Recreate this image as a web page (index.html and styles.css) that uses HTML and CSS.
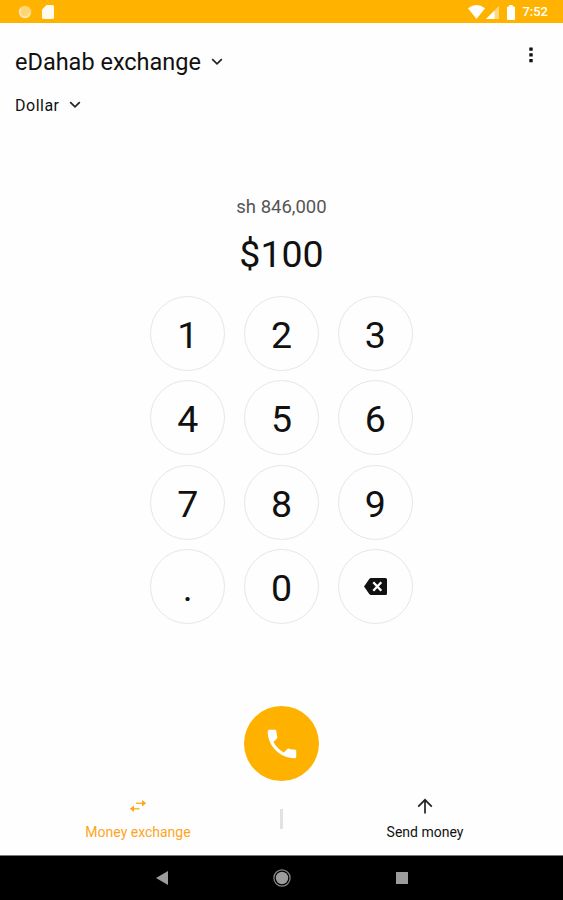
FILE: index.html
```html
<!DOCTYPE html>
<html lang="en">
<head>
  <meta charset="UTF-8">
  <meta name="viewport" content="width=device-width, initial-scale=1.0">
  <title>eDahab exchange</title>
  <link rel="stylesheet" href="styles.css">
</head>
<body>

  <div class="status-bar">
    <div class="status-left">
      <svg width="14" height="14" viewBox="0 0 14 14"><circle cx="7" cy="7" r="6.3" fill="#ffd574"/><path d="M3 3.5A5.2 5.2 0 1 0 12 8" fill="none" stroke="#ffe9b8" stroke-width="1.5"/></svg>
      <svg width="12" height="14" viewBox="0 0 12 14"><path d="M4.5 0H10.500Q12 0 12 1.500V12.500Q12 14 10.500 14H1.500Q0 14 0 12.500V4.500z" fill="#fffaf0"/></svg>
    </div>
    <div class="status-right">
      <svg class="wifi" width="17" height="14" viewBox="0 0 17 14"><path d="M0 3.200Q8.500 -3 17 3.200L8.500 14z" fill="#fff"/></svg>
      <svg class="signal" width="13" height="13" viewBox="0 0 13 13"><path d="M13 0V13H0z" fill="#ffd880"/><path d="M8.500 4.500V13H0z" fill="#fff"/></svg>
      <svg class="battery" width="8" height="15" viewBox="0 0 8 15"><path d="M2.300 0H5.700V1.500H7Q8 1.500 8 2.500V14Q8 15 7 15H1Q0 15 0 14V2.500Q0 1.500 1 1.500H2.300z" fill="#fff"/></svg>
      <span class="clock">7:52</span>
    </div>
  </div>

  <header class="header">
    <div>
      <div class="picker picker-title">
        <span>eDahab exchange</span>
        <svg width="12" height="8" viewBox="0 0 12 8"><path d="M1.200 1.200L6 5.900L10.800 1.200" fill="none" stroke="#222" stroke-width="1.700"/></svg>
      </div>
      <div class="picker picker-currency">
        <span>Dollar</span>
        <svg width="12" height="8" viewBox="0 0 12 8"><path d="M1.200 1.200L6 5.900L10.800 1.200" fill="none" stroke="#222" stroke-width="1.700"/></svg>
      </div>
    </div>
    <svg class="more" width="4" height="16" viewBox="0 0 4 16"><path d="M.3 .5h3.400v3.200H.3zM.3 6.300h3.400v3.200H.3zM.3 12.100h3.400v3.200H.3z" fill="#111"/></svg>
  </header>

  <main class="main">
    <div class="converted">sh 846,000</div>
    <div class="amount">$100</div>

    <div class="keypad">
      <button class="key">1</button>
      <button class="key">2</button>
      <button class="key">3</button>
      <button class="key">4</button>
      <button class="key">5</button>
      <button class="key">6</button>
      <button class="key">7</button>
      <button class="key">8</button>
      <button class="key">9</button>
      <button class="key">.</button>
      <button class="key">0</button>
      <button class="key key-delete" aria-label="Delete">
        <svg width="23" height="17" viewBox="0 0 23 17"><path d="M7 0H21.500Q23 0 23 1.500V15.500Q23 17 21.500 17H7Q6 17 5.300 16L0 8.500L5.300 1Q6 0 7 0z" fill="#111"/><path d="M9.300 4.300L17.300 12.700M17.300 4.300L9.300 12.700" stroke="#fff" stroke-width="2.300"/></svg>
      </button>
    </div>

    <button class="call" aria-label="Call">
      <svg width="38" height="38" viewBox="0 0 24 24"><path d="M6.620 10.790c1.440 2.830 3.760 5.140 6.590 6.590l2.200-2.200c.27-.27.67-.36 1.020-.24 1.120.37 2.330.57 3.570.57.55 0 1 .45 1 1V20c0 .55-.45 1-1 1-9.390 0-17-7.610-17-17 0-.55.45-1 1-1h3.500c.55 0 1 .45 1 1 0 1.250.2 2.450.57 3.570.11.35.03.74-.25 1.020l-2.200 2.200z" fill="#fff"/></svg>
    </button>
  </main>

  <nav class="tabs">
    <a class="tab tab-active">
      <svg width="18" height="16" viewBox="0 0 18 16"><g fill="none" stroke="#ffac1c" stroke-width="1.300"><path d="M7 5.300H15"/><path d="M3 10.800H10.500"/></g><path d="M13 2.100L17.200 5.300L13 8.500zM5 7.600L.8 10.800L5 14z" fill="#ffa51c"/></svg>
      <span>Money exchange</span>
    </a>
    <div class="divider"></div>
    <a class="tab">
      <svg width="18" height="16" viewBox="0 0 18 16"><path d="M9 15.500V2M2.200 8.600L9 1.800L15.800 8.600" fill="none" stroke="#222" stroke-width="1.700"/></svg>
      <span>Send money</span>
    </a>
  </nav>

  <div class="nav-bar">
    <svg width="12" height="14" viewBox="0 0 12 14"><path d="M12 0V14L0 7z" fill="#9c9c9c"/></svg>
    <svg width="18" height="18" viewBox="0 0 18 18"><circle cx="9" cy="9" r="8.100" fill="none" stroke="#888" stroke-width="1.200"/><circle cx="9" cy="9" r="6.200" fill="#9c9c9c"/></svg>
    <svg width="12" height="12" viewBox="0 0 12 12"><path d="M0 0H12V12H0z" fill="#9c9c9c"/></svg>
  </div>

</body>
</html>
```

FILE: styles.css
```css
* { box-sizing: border-box; }
body { margin: 0; height: 900px; display: flex; flex-direction: column; overflow: hidden; background: #fefefe; color: #111; font-family: Roboto, sans-serif; }
svg { display: block; flex-shrink: 0; }
button { padding: 0; border: none; color: inherit; font-family: inherit; cursor: pointer; }

.status-bar { height: 23px; flex-shrink: 0; display: flex; justify-content: space-between; padding: 0 15px 0 18px; background: #ffb300; color: #fff; }
.status-left { display: flex; align-items: center; gap: 10px; padding-top: 1px; }
.status-right { display: flex; align-items: center; padding-top: 1px; }
.signal { margin-left: 1px; }
.battery { margin-left: 8px; }
.clock { margin-left: 7px; font-size: 13px; font-weight: 500; line-height: 22px; }

.header { height: 158px; flex-shrink: 0; display: flex; justify-content: space-between; padding: 22px 30px 0 15px; }
.picker { display: flex; align-items: center; }
.picker-title { height: 34px; gap: 10px; font-size: 23.500px; }
.picker-currency { height: 22px; margin-top: 15px; gap: 9px; font-size: 16px; letter-spacing: 0.500px; }
.more { margin-top: 2px; }

.main { display: flex; flex-direction: column; align-items: center; }
.converted { height: 24px; margin-top: 14px; line-height: 24px; font-size: 18.500px; color: #555; }
.amount { height: 44px; margin-top: 13px; line-height: 44px; font-size: 37.500px; }

.keypad { display: grid; grid-template-columns: repeat(3, 75px); gap: 9.400px 18.700px; margin-top: 20px; }
.key { height: 75px; display: flex; align-items: center; justify-content: center; padding-top: 3px; border: 1px solid #e6e6e6; border-radius: 50%; background: #fefefe; font-size: 37.500px; }
.key-delete { padding-top: 0; }

.call { width: 75px; height: 75px; margin-top: 82px; display: flex; align-items: center; justify-content: center; border-radius: 50%; background: #ffb100; }

.tabs { flex: 1; display: flex; justify-content: center; padding-top: 17px; }
.tab { width: 284px; flex-shrink: 0; display: flex; flex-direction: column; align-items: center; gap: 9px; font-size: 14px; line-height: 18px; }
.tab-active { color: #ffa51c; }
.divider { width: 3px; height: 20px; flex-shrink: 0; margin-top: 11px; background: #e2e2e2; }

.nav-bar { height: 45px; flex-shrink: 0; display: flex; align-items: center; justify-content: center; gap: 105px; border-top: 1px solid #777; background: #000; }
```
